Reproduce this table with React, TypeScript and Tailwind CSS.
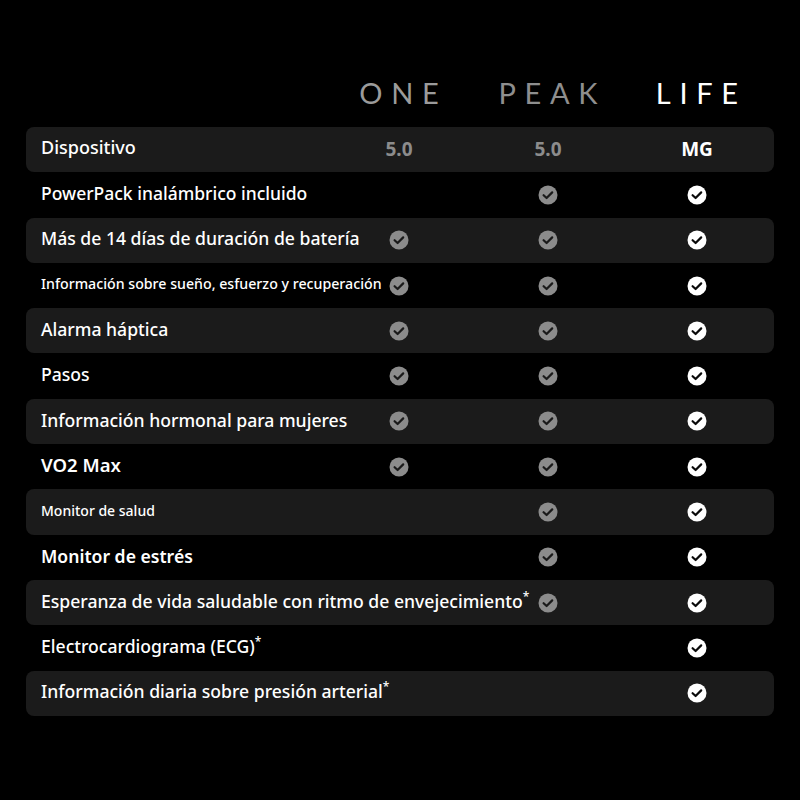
// Tabla comparativa de planes (ONE / PEAK / LIFE) sobre fondo negro.
type Level = "one" | "peak" | "life";

interface Feature {
  label: string;
  size: string;
  weight?: string;
  star?: boolean;
  from: Level | null;
}

const features: Feature[] = [
  { label: "PowerPack inalámbrico incluido", size: "text-[17.5px]", from: "peak" },
  { label: "Más de 14 días de duración de batería", size: "text-[17.6px]", from: "one" },
  { label: "Información sobre sueño, esfuerzo y recuperación", size: "text-[14.2px]", from: "one" },
  { label: "Alarma háptica", size: "text-[17.6px]", from: "one" },
  { label: "Pasos", size: "text-[17.6px]", from: "one" },
  { label: "Información hormonal para mujeres", size: "text-[17.6px]", from: "one" },
  { label: "VO2 Max", size: "text-[18.5px]", weight: "font-semibold", from: "one" },
  { label: "Monitor de salud", size: "text-[14px]", from: "peak" },
  { label: "Monitor de estrés", size: "text-[17.6px]", weight: "font-semibold", from: "peak" },
  { label: "Esperanza de vida saludable con ritmo de envejecimiento", star: true, size: "text-[17.6px]", from: "peak" },
  { label: "Electrocardiograma (ECG)", star: true, size: "text-[17.6px]", from: "life" },
  { label: "Información diaria sobre presión arterial", star: true, size: "text-[17.6px]", from: "life" },
];

const order: Level[] = ["one", "peak", "life"];

function has(from: Level | null, col: Level) {
  if (!from) return false;
  return order.indexOf(col) >= order.indexOf(from);
}

function Check({ white }: { white?: boolean }) {
  return (
    <svg width="20" height="20" viewBox="0 0 20 20" className="block">
      <circle cx="10" cy="10" r="9.5" fill={white ? "#ffffff" : "#8c8c8c"} />
      <path
        d="M5.6 10.2 L8.6 13 L14.2 7.4"
        fill="none"
        stroke={white ? "#0a0a0a" : "#1a1a1a"}
        strokeWidth="2.2"
        strokeLinecap="round"
        strokeLinejoin="round"
      />
    </svg>
  );
}

function Row({ striped, children }: { striped: boolean; children: React.ReactNode }) {
  return (
    <div
      className={
        "grid grid-cols-[minmax(0,1fr)_150px_148px_150px] items-center h-[45.3px] pl-[15px] pr-[2px] rounded-[8px] " +
        (striped ? "bg-[#1b1b1b]" : "")
      }
    >
      {children}
    </div>
  );
}

export default function App() {
  return (
    <div
      className="min-h-[800px] w-[800px] bg-black text-white pt-[76px] px-[26px]"
      style={{ fontFamily: '"Noto Sans", "Open Sans", sans-serif' }}
    >
      {/* cabecera */}
      <div className="grid grid-cols-[minmax(0,1fr)_150px_148px_150px] pr-[2px] pl-[15px] h-[32px] items-center">
        <div />
        {[
          { name: "ONE", cls: "text-[#9b9b9b]" },
          { name: "PEAK", cls: "text-[#8e8e8e]" },
          { name: "LIFE", cls: "text-white" },
        ].map((h) => (
          <div
            key={h.name}
            className={"text-center font-normal text-[29px] leading-none tracking-[0.3em] pl-[0.3em] " + h.cls}
            style={{ fontFamily: '"Lato", "Noto Sans", sans-serif' }}
          >
            {h.name}
          </div>
        ))}
      </div>

      <div className="mt-[19px] flex flex-col">
        <Row striped>
          <div className="text-[18px] font-medium -mt-[4px]">Dispositivo</div>
          <div className="text-center text-[19px] font-bold text-[#8c8c8c]">5.0</div>
          <div className="text-center text-[19px] font-bold text-[#8c8c8c]">5.0</div>
          <div className="text-center text-[19px] font-bold text-white">MG</div>
        </Row>

        {features.map((f, i) => (
          <Row key={f.label} striped={i % 2 === 1}>
            <div
              className={
                "whitespace-nowrap leading-none -mt-[2px] " + f.size + " " + (f.weight ?? "font-medium")
              }
            >
              {f.label}
              {f.star && <span className="text-[12px] align-top relative -top-[2px]">*</span>}
            </div>
            {order.map((col) => (
              <div key={col} className="flex justify-center">
                {has(f.from, col) && <Check white={col === "life"} />}
              </div>
            ))}
          </Row>
        ))}
      </div>
    </div>
  );
}
